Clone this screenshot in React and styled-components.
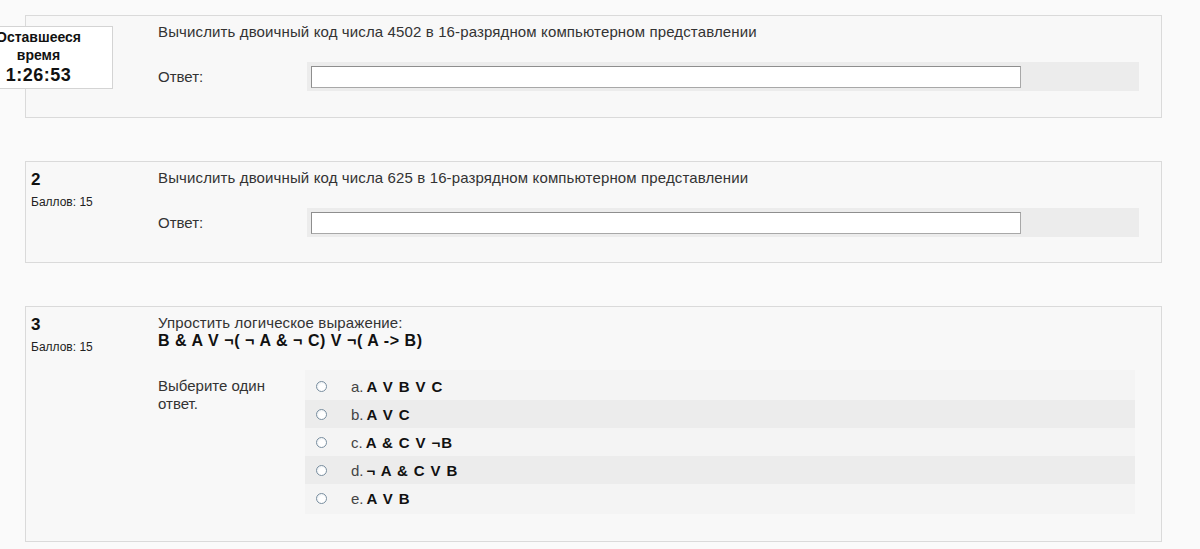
import React from "react";
import styled, { createGlobalStyle } from "styled-components";

const GlobalStyle = createGlobalStyle`
  html, body {
    margin: 0;
    padding: 0;
    background: #fafafa;
    font-family: "Liberation Sans", Arial, sans-serif;
    color: #222;
  }
`;

const Page = styled.div`
  position: relative;
  width: 1200px;
  height: 549px;
  overflow: hidden;
  padding: 15px 0 0 25px;
  box-sizing: border-box;
  display: flex;
  flex-direction: column;
  gap: 43px;
`;

const Card = styled.div`
  width: 1137px;
  height: ${p => p.h}px;
  box-sizing: border-box;
  border: 1px solid #dadada;
  background: #f8f8f8;
  display: flex;
  flex-shrink: 0;
`;

const Info = styled.div`
  width: 132px;
  flex-shrink: 0;
  padding: 8px 0 0 5px;
  box-sizing: border-box;
`;

const Number = styled.div`
  font-size: 17px;
  font-weight: bold;
  line-height: 19px;
  color: #111;
`;

const Grade = styled.div`
  font-size: 12px;
  line-height: 14px;
  margin-top: 6px;
  color: #222;
`;

const Content = styled.div`
  flex: 1;
  padding: 7px 22px 0 0;
`;

const QText = styled.div`
  font-size: 15px;
  line-height: 17px;
  color: #333;
  letter-spacing: 0.13px;
`;

const Formula = styled.div`
  font-size: 16px;
  font-weight: bold;
  line-height: 19px;
  color: #111;
  letter-spacing: 0.55px;
`;

const AnswerRow = styled.div`
  display: flex;
  align-items: ${p => (p.top ? "flex-start" : "center")};
  margin-top: ${p => p.mt}px;
`;

const AnswerLabel = styled.div`
  width: ${p => p.w}px;
  flex-shrink: 0;
  font-size: 15px;
  line-height: 18px;
  color: #333;
  padding-top: ${p => p.pt || 0}px;
`;

const AnswerBox = styled.div`
  flex: 1;
  height: 29px;
  background: #ececec;
  padding: 4px;
  box-sizing: border-box;
`;

const TextInput = styled.input`
  display: block;
  width: 710px;
  height: 22px;
  box-sizing: border-box;
  border: 1px solid #a8a8a8;
  border-top-color: #8e8e8e;
  border-left-color: #8e8e8e;
  background: #fff;
  margin: 0;
  padding: 0 2px;
`;

const Options = styled.div`
  flex: 1;
  margin-right: 4px;
  padding: 2px 0;
  background: #f4f4f4;
`;

const OptionRow = styled.label`
  display: flex;
  align-items: center;
  height: 28px;
  background: ${p => (p.alt ? "#ececec" : "#f4f4f4")};
  font-size: 15px;
  color: #333;
`;

const Radio = styled.span`
  width: 11px;
  height: 11px;
  box-sizing: border-box;
  border-radius: 50%;
  border: 1px solid #7a8fa0;
  background: radial-gradient(circle at 60% 60%, #fff 40%, #dfe5ea 100%);
  margin: 0 24px 0 11px;
  flex-shrink: 0;
`;

const Letter = styled.span`
  font-weight: normal;
  color: #444;
  margin-right: 3px;
`;

const OptionText = styled.span`
  font-size: 15px;
  font-weight: bold;
  color: #111;
  letter-spacing: 0.9px;
`;

const Timer = styled.div`
  position: absolute;
  left: -36px;
  top: 26px;
  width: 149px;
  height: 63px;
  box-sizing: border-box;
  border: 1px solid #d4d4d4;
  background: #fff;
  text-align: center;
  font-weight: bold;
  color: #111;
  padding-top: 1px;
`;

const TimerLabel = styled.div`
  font-size: 14px;
  line-height: 18px;
`;

const TimerValue = styled.div`
  font-size: 18px;
  line-height: 22px;
  letter-spacing: 0.5px;
`;

const options = [
  { letter: "a.", text: "A V B V C" },
  { letter: "b.", text: "A V C" },
  { letter: "c.", text: "A & C V ¬B" },
  { letter: "d.", text: "¬ A & C V B" },
  { letter: "e.", text: "A V B" }
];

const TextQuestion = ({ number, height, text }) => (
  <Card h={height}>
    <Info>
      {number && (
        <>
          <Number>{number}</Number>
          <Grade>Баллов: 15</Grade>
        </>
      )}
    </Info>
    <Content>
      <QText>{text}</QText>
      <AnswerRow mt={22}>
        <AnswerLabel w={149}>Ответ:</AnswerLabel>
        <AnswerBox>
          <TextInput type="text" />
        </AnswerBox>
      </AnswerRow>
    </Content>
  </Card>
);

export default function App() {
  return (
    <Page>
      <GlobalStyle />
      <TextQuestion
        height={103}
        text="Вычислить двоичный код числа 4502 в 16-разрядном компьютерном представлении"
      />
      <TextQuestion
        number="2"
        height={102}
        text="Вычислить двоичный код числа 625 в 16-разрядном компьютерном представлении"
      />
      <Card h={236}>
        <Info>
          <Number>3</Number>
          <Grade>Баллов: 15</Grade>
        </Info>
        <Content>
          <QText>Упростить логическое выражение:</QText>
          <Formula>B &amp; A V ¬( ¬ A &amp; ¬ C) V ¬( A -&gt; B)</Formula>
          <AnswerRow top mt={20}>
            <AnswerLabel w={147} pt={7}>
              Выберите один
              <br />
              ответ.
            </AnswerLabel>
            <Options>
              {options.map((o, i) => (
                <OptionRow key={o.letter} alt={i % 2 === 1}>
                  <Radio />
                  <Letter>{o.letter}</Letter>
                  <OptionText>{o.text}</OptionText>
                </OptionRow>
              ))}
            </Options>
          </AnswerRow>
        </Content>
      </Card>
      <Timer>
        <TimerLabel>Оставшееся</TimerLabel>
        <TimerLabel>время</TimerLabel>
        <TimerValue>1:26:53</TimerValue>
      </Timer>
    </Page>
  );
}
